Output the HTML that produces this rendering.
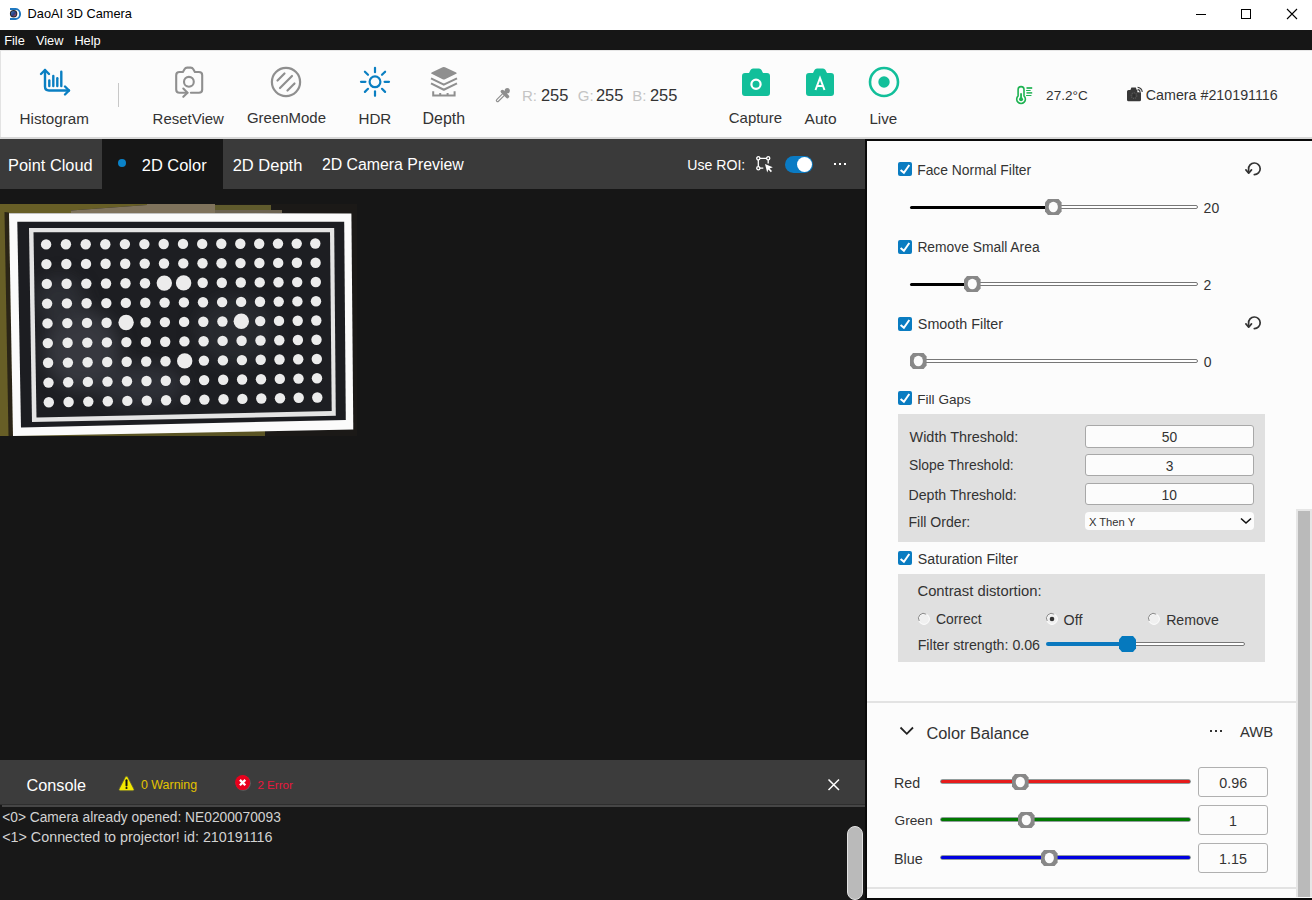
<!DOCTYPE html>
<html><head><meta charset="utf-8">
<style>
*{margin:0;padding:0;box-sizing:border-box}
html,body{width:1312px;height:900px;overflow:hidden;background:#fff;font-family:"Liberation Sans",sans-serif}
.a{position:absolute}
.t{position:absolute;white-space:nowrap;line-height:1}
svg{position:absolute;overflow:visible}
</style></head><body>
<div class="a" style="left:0px;top:0px;width:1312px;height:30px;background:#ffffff;"></div>
<svg style="left:9px;top:7px" width="14" height="14" viewBox="0 0 14 14">
<defs><linearGradient id="lg1" x1="0" y1="0" x2="1" y2="1"><stop offset="0" stop-color="#3f78c0"/><stop offset="0.55" stop-color="#2c3f80"/><stop offset="1" stop-color="#d04858"/></linearGradient></defs>
<path d="M1 2.1 H6.8 A4.3 4.9 0 0 1 6.8 11.9 H1" fill="none" stroke="#1f78c0" stroke-width="2"/>
<circle cx="4.6" cy="6.8" r="3.7" fill="#262626"/><circle cx="4.6" cy="6.8" r="2.7" fill="url(#lg1)"/>
</svg>
<div class="t" style="left:27.58px;top:8.04px;font-size:12.78px;color:#000;">DaoAI 3D Camera</div>
<div class="a" style="left:1196px;top:14px;width:10px;height:1px;background:#000;"></div>
<div class="a" style="left:1241px;top:9px;width:10px;height:10px;background:transparent;border:1px solid #000"></div>
<svg style="left:1287px;top:9px" width="10" height="10" viewBox="0 0 10 10"><path d="M0 0 L10 10 M10 0 L0 10" stroke="#000" stroke-width="1.1"/></svg>
<div class="a" style="left:0px;top:30px;width:1312px;height:20px;background:#161616;"></div>
<div class="t" style="left:4.18px;top:34.52px;font-size:12.80px;color:#fff;">File</div>
<div class="t" style="left:35.94px;top:34.52px;font-size:12.80px;color:#fff;">View</div>
<div class="t" style="left:74.38px;top:34.52px;font-size:12.80px;color:#fff;">Help</div>
<div class="a" style="left:0px;top:50px;width:1312px;height:87px;background:#fcfcfc;border-top:1px solid #e6e6e6;border-left:1px solid #e3e3e3"></div>
<div class="a" style="left:0px;top:137px;width:1312px;height:2px;background:#d8d8d8;"></div>
<svg style="left:38px;top:66px" width="34" height="28" viewBox="0 0 34 28">
<g fill="none" stroke="#0a7fc2" stroke-width="2.4" stroke-linecap="round" stroke-linejoin="round">
<path d="M3 8 L7 4 L11 8"/><path d="M7 4 V20.5 Q7 24.5 11 24.5 H31"/><path d="M27 20.5 L31 24.5 L27 28.5"/>
<path d="M11.3 20 V14.5"/><path d="M15.3 20 V9.9"/><path d="M19.3 20 V12.3"/><path d="M23.3 20 V5.7"/>
</g></svg>
<div class="a" style="left:118px;top:83px;width:1px;height:24px;background:#c8c8c8;"></div>
<div class="t" style="left:19.58px;top:111.28px;font-size:15.20px;color:#333;">Histogram</div>
<svg style="left:174px;top:66px" width="31" height="33" viewBox="0 0 31 33">
<g fill="none" stroke="#8f8f8f" stroke-width="2.1" stroke-linecap="round" stroke-linejoin="round">
<path d="M16.9 26.7 H24.9 Q28.2 26.7 28.2 23.4 V9.3 Q28.2 6 24.9 6 H20.9 L19.3 3.2 Q18.4 1.6 16.6 1.6 H13.2 Q11.4 1.6 10.5 3.2 L8.9 6 H5.5 Q2.2 6 2.2 9.3 V23.4 Q2.2 26.7 5.5 26.7 H13.4"/>
<circle cx="14.9" cy="15.8" r="4.9"/>
<path d="M9.3 22.6 L13.5 26.7 L9.3 30.8"/>
</g></svg>
<div class="t" style="left:152.60px;top:111.46px;font-size:14.98px;color:#333;">ResetView</div>
<svg style="left:270px;top:66px" width="32" height="32" viewBox="0 0 32 32">
<g fill="none" stroke="#8f8f8f" stroke-width="2.2" stroke-linecap="round">
<circle cx="16" cy="16" r="14.1"/>
<path d="M7.5 14.5 L14.5 7.5"/><path d="M10 22 L22 10"/><path d="M17.5 24.5 L24.5 17.5"/>
</g></svg>
<div class="t" style="left:246.95px;top:111.48px;font-size:14.97px;color:#333;">GreenMode</div>
<svg style="left:359px;top:66px" width="32" height="32" viewBox="0 0 32 32">
<g fill="none" stroke="#0a7fc2" stroke-width="2.2" stroke-linecap="round">
<circle cx="16" cy="15.8" r="5.4"/>
<path d="M16 1.8 V6.2"/><path d="M16 25.4 V29.8"/><path d="M2 15.8 H6.4"/><path d="M25.6 15.8 H30"/>
<path d="M5.9 5.7 L9 8.8"/><path d="M23 22.8 L26.1 25.9"/><path d="M26.1 5.7 L23 8.8"/><path d="M9 22.8 L5.9 25.9"/>
</g></svg>
<div class="t" style="left:358.49px;top:111.33px;font-size:15.15px;color:#333;">HDR</div>
<svg style="left:430px;top:66px" width="28" height="32" viewBox="0 0 28 32">
<path d="M12.6 1.2 Q13.8 0.6 15 1.2 L26.2 6.4 Q27.4 7.1 26.2 7.8 L15 13.3 Q13.8 13.9 12.6 13.3 L1.6 7.8 Q0.4 7.1 1.6 6.4 Z" fill="#8f8f8f"/>
<path d="M1 12.4 L13.8 18.6 L27 12.4" fill="none" stroke="#8f8f8f" stroke-width="2.1" stroke-linejoin="round"/>
<path d="M1 17.4 L13.8 23.7 L27 17.4" fill="none" stroke="#8f8f8f" stroke-width="2.1" stroke-linejoin="round"/>
<path d="M3.2 25.3 V29.6 H24.6 V25.3 M10.2 27.1 V29.6 M17.6 27.1 V29.6" fill="none" stroke="#8f8f8f" stroke-width="2"/>
</svg>
<div class="t" style="left:422.52px;top:110.64px;font-size:15.95px;color:#333;">Depth</div>
<svg style="left:495px;top:87px" width="16" height="16" viewBox="0 0 16 16">
<path d="M9.5 6.5 L2.6 13.4" stroke="#8f8f8f" stroke-width="3.6" stroke-linecap="round"/>
<path d="M8.5 7.5 L2.6 13.4" stroke="#fcfcfc" stroke-width="1.3" stroke-linecap="round"/>
<path d="M7.4 4.6 L12.4 9.6" stroke="#8f8f8f" stroke-width="3.6" stroke-linecap="round"/>
<circle cx="12.3" cy="3.7" r="2.6" fill="#8f8f8f"/>
<path d="M9.6 6.4 L12.3 3.7" stroke="#8f8f8f" stroke-width="3.6"/>
</svg>
<div class="t" style="left:522.00px;top:87.85px;font-size:15.00px;color:#c4c4c4;">R:</div>
<div class="t" style="left:540.98px;top:86.62px;font-size:16.44px;color:#333;">255</div>
<div class="t" style="left:577.85px;top:87.85px;font-size:15.00px;color:#c4c4c4;">G:</div>
<div class="t" style="left:595.88px;top:86.62px;font-size:16.44px;color:#333;">255</div>
<div class="t" style="left:632.30px;top:87.85px;font-size:15.00px;color:#c4c4c4;">B:</div>
<div class="t" style="left:649.98px;top:86.62px;font-size:16.44px;color:#333;">255</div>
<svg style="left:741px;top:68px" width="30" height="29" viewBox="0 0 30 29">
<path d="M8 5 L9.5 2 Q10.3 0.5 12 0.5 H18 Q19.7 0.5 20.5 2 L22 5 H26 Q29 5 29 8 V25 Q29 28 26 28 H4 Q1 28 1 25 V8 Q1 5 4 5 Z" fill="#12bf9a"/>
<circle cx="15" cy="16.3" r="4.6" fill="none" stroke="#fff" stroke-width="2.2"/>
</svg>
<div class="t" style="left:728.75px;top:111.47px;font-size:14.97px;color:#333;">Capture</div>
<svg style="left:805px;top:68px" width="30" height="29" viewBox="0 0 30 29">
<path d="M8 5 L9.5 2 Q10.3 0.5 12 0.5 H18 Q19.7 0.5 20.5 2 L22 5 H26 Q29 5 29 8 V25 Q29 28 26 28 H4 Q1 28 1 25 V8 Q1 5 4 5 Z" fill="#12bf9a"/>
<path d="M10.5 22 L15 10 L19.5 22 M12.2 18 H17.8" fill="none" stroke="#fff" stroke-width="2"/>
</svg>
<div class="t" style="left:804.60px;top:111.00px;font-size:15.53px;color:#333;">Auto</div>
<svg style="left:868px;top:66px" width="32" height="32" viewBox="0 0 32 32">
<circle cx="16" cy="16" r="14" fill="none" stroke="#12bf9a" stroke-width="2.6"/>
<circle cx="16" cy="16" r="5.7" fill="#12bf9a"/>
</svg>
<div class="t" style="left:869.39px;top:111.33px;font-size:15.15px;color:#333;">Live</div>
<svg style="left:1015px;top:85px" width="18" height="20" viewBox="0 0 18 20">
<path d="M3.1 10.95 V4.55 A2.95 2.95 0 0 1 9.0 4.55 V10.95 A4.35 4.35 0 1 1 3.1 10.95 Z" fill="none" stroke="#1db251" stroke-width="1.6"/>
<path d="M6.05 8.2 V14" stroke="#1db251" stroke-width="1.8"/><circle cx="6.05" cy="14.3" r="2.0" fill="#1db251"/>
<path d="M11.5 3 H17.2 M11.5 7.9 H17.2" stroke="#1db251" stroke-width="1.8" opacity="0.85"/>
<path d="M11.5 5.5 H15.2 M11.5 10.5 H16" stroke="#1db251" stroke-width="1.2" stroke-linecap="round"/>
</svg>
<div class="t" style="left:1046.12px;top:89.38px;font-size:13.56px;color:#333;">27.2°C</div>
<svg style="left:1126px;top:85px" width="17" height="17" viewBox="0 0 17 17">
<path d="M2.5 5 H4.4 L5.4 2.6 H9.8 L10.8 5 H13.5 Q15 5 15 6.5 V14.7 Q15 16.2 13.5 16.2 H2.5 Q1 16.2 1 14.7 V6.5 Q1 5 2.5 5 Z" fill="#383838"/>
<path d="M11.4 7.2 V1.2 A6 6 0 0 1 17.4 7.2 Z" fill="#fcfcfc"/>
<path d="M11.6 2.4 A4.6 4.6 0 0 1 16.2 7" fill="none" stroke="#383838" stroke-width="1.1"/>
<path d="M11.6 4.6 A2.4 2.4 0 0 1 14 7" fill="none" stroke="#383838" stroke-width="1.1"/>
<circle cx="8" cy="10.6" r="2.8" fill="none" stroke="#5a5a5a" stroke-width="1.1" stroke-dasharray="1.2 0.9"/>
<rect x="7.3" y="9.2" width="1.4" height="2.8" fill="#2a2a2a"/>
</svg>
<div class="t" style="left:1145.79px;top:87.87px;font-size:14.27px;color:#333;">Camera #210191116</div>
<div class="a" style="left:0px;top:139px;width:865px;height:50px;background:#3a3a3a;"></div>
<div class="a" style="left:102px;top:139px;width:121px;height:50px;background:#161616;"></div>
<div class="t" style="left:8.09px;top:157.00px;font-size:16.36px;color:#fff;">Point Cloud</div>
<div class="a" style="left:118px;top:159px;width:8px;height:8px;border-radius:50%;background:#0a82c8"></div>
<div class="t" style="left:141.78px;top:156.92px;font-size:16.44px;color:#fff;">2D Color</div>
<div class="t" style="left:232.68px;top:156.88px;font-size:16.50px;color:#fff;">2D Depth</div>
<div class="t" style="left:321.91px;top:157.42px;font-size:15.85px;color:#fff;">2D Camera Preview</div>
<div class="t" style="left:687.34px;top:158.12px;font-size:14.09px;color:#fff;">Use ROI:</div>
<svg style="left:755.7px;top:156px" width="18" height="17" viewBox="0 0 18 17">
<g fill="none" stroke="#fff" stroke-width="1.3">
<circle cx="2.3" cy="2.3" r="1.6"/><circle cx="12.2" cy="2.3" r="1.6"/><circle cx="2.3" cy="12.2" r="1.6"/>
<path d="M3.9 2.3 H10.6 M2.3 3.9 V10.6 M3.9 12.2 H7.3 M12.2 3.9 V7.6"/>
</g>
<path d="M9 8 L16.8 11.3 L13.6 12.4 L16 15 L14.8 16.2 L12.4 13.6 L11.2 16.6 Z" fill="#fff"/>
</svg>
<div class="a" style="left:785px;top:155.5px;width:28px;height:17px;border-radius:9px;background:#0a7bc4"></div>
<div class="a" style="left:797px;top:156.5px;width:15px;height:15px;border-radius:50%;background:#fff"></div>
<div class="a" style="left:834px;top:162.5px;width:2.2px;height:2.2px;background:#fff;"></div>
<div class="a" style="left:839px;top:162.5px;width:2.2px;height:2.2px;background:#fff;"></div>
<div class="a" style="left:844px;top:162.5px;width:2.2px;height:2.2px;background:#fff;"></div>
<div class="a" style="left:0px;top:189px;width:865px;height:571px;background:#161616;"></div>
<div class="a" style="left:0px;top:760px;width:865px;height:44px;background:#3c3c3c;"></div>
<div class="a" style="left:0px;top:804px;width:865px;height:1px;background:#2e2e2e;"></div>
<div class="a" style="left:0px;top:805px;width:865px;height:95px;background:#181818;"></div>
<div class="a" style="left:2px;top:805px;width:863px;height:2px;background:#464646;"></div>
<div class="t" style="left:26.49px;top:777.19px;font-size:16.25px;color:#fff;">Console</div>
<svg style="left:117.5px;top:774.5px" width="17" height="17" viewBox="0 0 17 17">
<path d="M8.5 1.2 Q9.3 1.2 9.8 2.2 L16 14.2 Q16.5 15.6 15 15.8 H2 Q0.5 15.6 1 14.2 L7.2 2.2 Q7.7 1.2 8.5 1.2 Z" fill="#f2e800" stroke="#5a5a3a" stroke-width="0.8"/>
<path d="M8.5 5.2 V10.6" stroke="#111" stroke-width="2" stroke-linecap="round"/><circle cx="8.5" cy="13" r="1.1" fill="#111"/>
</svg>
<div class="t" style="left:141.00px;top:778.95px;font-size:12.41px;color:#e3c300;">0 Warning</div>
<svg style="left:235px;top:775px" width="17" height="17" viewBox="0 0 17 17">
<circle cx="8.2" cy="8.2" r="7.6" fill="#7a7a7a" opacity="0.6"/>
<circle cx="7.6" cy="7.6" r="7.5" fill="#e8001c"/>
<path d="M4.9 4.9 L10.3 10.3 M10.3 4.9 L4.9 10.3" stroke="#fff" stroke-width="2.3"/>
</svg>
<div class="t" style="left:257.42px;top:779.14px;font-size:11.61px;color:#e8173d;">2 Error</div>
<svg style="left:828px;top:778.5px" width="12" height="12" viewBox="0 0 12 12"><path d="M0.5 0.5 L11 11 M11 0.5 L0.5 11" stroke="#fff" stroke-width="1.5"/></svg>
<div class="t" style="left:2.21px;top:811.29px;font-size:13.78px;color:#d2d2d2;">&lt;0&gt; Camera already opened: NE0200070093</div>
<div class="t" style="left:2.18px;top:829.82px;font-size:14.33px;color:#d2d2d2;">&lt;1&gt; Connected to projector! id: 210191116</div>
<div class="a" style="left:847px;top:826px;width:16px;height:74px;border-radius:8px;background:#bababa;border:1.5px solid #e2e2e2"></div>
<div class="a" style="left:865px;top:139px;width:2px;height:761px;background:#0a0a0a;"></div>
<div class="a" style="left:865px;top:139px;width:447px;height:2px;background:#0a0a0a;"></div>
<div class="a" style="left:867px;top:141px;width:445px;height:757px;background:#fcfcfc;"></div>
<div class="a" style="left:865px;top:898px;width:447px;height:2px;background:#0a0a0a;"></div>
<svg style="left:898px;top:162px" width="14" height="14" viewBox="0 0 14 14">
<rect x="0" y="0" width="14" height="14" rx="2" fill="#0a7cc1"/>
<path d="M2.6 7.9 L5.9 10.8 L11.3 3.0" fill="none" stroke="#fff" stroke-width="2"/>
</svg>
<div class="t" style="left:917.19px;top:163.52px;font-size:13.86px;color:#333;">Face Normal Filter</div>
<svg style="left:1245.4px;top:159.9px" width="18" height="18" viewBox="0 0 18 18">
<path d="M9.3 14.6 A5.8 5.8 0 1 0 3.6 9.2 V12.4" fill="none" stroke="#333" stroke-width="1.7" stroke-linecap="round"/>
<path d="M0.9 9.9 L3.7 13.2 L6.5 9.9" fill="none" stroke="#333" stroke-width="1.7" stroke-linecap="round" stroke-linejoin="round"/>
</svg>
<div class="a" style="left:1053.3px;top:205.0px;width:144.29999999999995px;height:4.4px;background:#fff;border:1px solid #777;border-radius:2.2px"></div>
<div class="a" style="left:909.5px;top:205.7px;width:143.79999999999995px;height:3px;background:#000;border-radius:1.5px"></div>
<svg style="left:1045.0px;top:199.2px" width="17" height="16" viewBox="0 0 17 16">
<path d="M3 0 H13.6 L16.6 3.4 V12.6 L13.6 16 H3 L0 12.6 V3.4 Z" fill="#888"/><ellipse cx="8.3" cy="8" rx="4.6" ry="5.2" fill="#fcfcfc"/>
</svg>
<div class="t" style="left:1203.60px;top:201.30px;font-size:14.00px;color:#333;">20</div>
<svg style="left:898px;top:239.5px" width="14" height="14" viewBox="0 0 14 14">
<rect x="0" y="0" width="14" height="14" rx="2" fill="#0a7cc1"/>
<path d="M2.6 7.9 L5.9 10.8 L11.3 3.0" fill="none" stroke="#fff" stroke-width="2"/>
</svg>
<div class="t" style="left:917.39px;top:240.53px;font-size:13.84px;color:#333;">Remove Small Area</div>
<div class="a" style="left:972.2px;top:282.0px;width:225.39999999999986px;height:4.4px;background:#fff;border:1px solid #777;border-radius:2.2px"></div>
<div class="a" style="left:909.5px;top:282.7px;width:62.700000000000045px;height:3px;background:#000;border-radius:1.5px"></div>
<svg style="left:963.9px;top:276.2px" width="17" height="16" viewBox="0 0 17 16">
<path d="M3 0 H13.6 L16.6 3.4 V12.6 L13.6 16 H3 L0 12.6 V3.4 Z" fill="#888"/><ellipse cx="8.3" cy="8" rx="4.6" ry="5.2" fill="#fcfcfc"/>
</svg>
<div class="t" style="left:1203.60px;top:278.30px;font-size:14.00px;color:#333;">2</div>
<svg style="left:898px;top:316.5px" width="14" height="14" viewBox="0 0 14 14">
<rect x="0" y="0" width="14" height="14" rx="2" fill="#0a7cc1"/>
<path d="M2.6 7.9 L5.9 10.8 L11.3 3.0" fill="none" stroke="#fff" stroke-width="2"/>
</svg>
<div class="t" style="left:917.85px;top:317.31px;font-size:14.34px;color:#333;">Smooth Filter</div>
<svg style="left:1245.4px;top:313.8px" width="18" height="18" viewBox="0 0 18 18">
<path d="M9.3 14.6 A5.8 5.8 0 1 0 3.6 9.2 V12.4" fill="none" stroke="#333" stroke-width="1.7" stroke-linecap="round"/>
<path d="M0.9 9.9 L3.7 13.2 L6.5 9.9" fill="none" stroke="#333" stroke-width="1.7" stroke-linecap="round" stroke-linejoin="round"/>
</svg>
<div class="a" style="left:918.3px;top:359.0px;width:279.29999999999995px;height:4.4px;background:#fff;border:1px solid #777;border-radius:2.2px"></div>
<div class="a" style="left:909.5px;top:359.7px;width:8.799999999999955px;height:3px;background:#000;border-radius:1.5px"></div>
<svg style="left:910.0px;top:353.2px" width="17" height="16" viewBox="0 0 17 16">
<path d="M3 0 H13.6 L16.6 3.4 V12.6 L13.6 16 H3 L0 12.6 V3.4 Z" fill="#888"/><ellipse cx="8.3" cy="8" rx="4.6" ry="5.2" fill="#fcfcfc"/>
</svg>
<div class="t" style="left:1203.74px;top:355.10px;font-size:14.00px;color:#333;">0</div>
<svg style="left:898px;top:391px" width="14" height="14" viewBox="0 0 14 14">
<rect x="0" y="0" width="14" height="14" rx="2" fill="#0a7cc1"/>
<path d="M2.6 7.9 L5.9 10.8 L11.3 3.0" fill="none" stroke="#fff" stroke-width="2"/>
</svg>
<div class="t" style="left:917.31px;top:392.76px;font-size:13.58px;color:#333;">Fill Gaps</div>
<div class="a" style="left:898px;top:414px;width:367px;height:128px;background:#e0e0e0;"></div>
<div class="t" style="left:909.53px;top:429.93px;font-size:14.44px;color:#333;">Width Threshold:</div>
<div class="t" style="left:908.97px;top:459.19px;font-size:13.90px;color:#333;">Slope Threshold:</div>
<div class="t" style="left:908.47px;top:487.97px;font-size:14.16px;color:#333;">Depth Threshold:</div>
<div class="t" style="left:908.47px;top:515.22px;font-size:14.09px;color:#333;">Fill Order:</div>
<div class="a" style="left:1085px;top:425.2px;width:169px;height:22.4px;background:#fcfcfc;border:1px solid #a8a8a8;border-radius:3px"></div>
<div class="t" style="left:1161.81px;top:431.17px;font-size:13.80px;color:#333;">50</div>
<div class="a" style="left:1085px;top:454.3px;width:169px;height:22.1px;background:#fcfcfc;border:1px solid #a8a8a8;border-radius:3px"></div>
<div class="t" style="left:1165.67px;top:459.97px;font-size:13.80px;color:#333;">3</div>
<div class="a" style="left:1085px;top:483.3px;width:169px;height:22.2px;background:#fcfcfc;border:1px solid #a8a8a8;border-radius:3px"></div>
<div class="t" style="left:1161.56px;top:489.07px;font-size:13.80px;color:#333;">10</div>
<div class="a" style="left:1085px;top:512px;width:169px;height:18px;background:#fcfcfc;border-radius:4px"></div>
<div class="t" style="left:1088.92px;top:516.68px;font-size:11.20px;color:#333;">X Then Y</div>
<svg style="left:1240px;top:517px" width="12" height="8" viewBox="0 0 12 8"><path d="M1 1.5 L6 6 L11 1.5" fill="none" stroke="#111" stroke-width="1.6"/></svg>
<svg style="left:898px;top:551.3px" width="14" height="14" viewBox="0 0 14 14">
<rect x="0" y="0" width="14" height="14" rx="2" fill="#0a7cc1"/>
<path d="M2.6 7.9 L5.9 10.8 L11.3 3.0" fill="none" stroke="#fff" stroke-width="2"/>
</svg>
<div class="t" style="left:917.86px;top:552.05px;font-size:14.18px;color:#333;">Saturation Filter</div>
<div class="a" style="left:898px;top:574px;width:367px;height:88px;background:#e0e0e0;"></div>
<div class="t" style="left:917.46px;top:584.43px;font-size:14.79px;color:#333;">Contrast distortion:</div>
<svg style="left:917.9px;top:613.1px" width="12" height="12" viewBox="0 0 12 12">
<circle cx="6" cy="6" r="5.4" fill="#f0f0f0" stroke="#fff" stroke-width="1"/>
<path d="M1.2 8 A5 5 0 0 1 8.2 1.2" fill="none" stroke="#8a8a8a" stroke-width="1"/>
</svg>
<div class="t" style="left:935.90px;top:612.85px;font-size:13.94px;color:#333;">Correct</div>
<svg style="left:1045.8px;top:613.1px" width="12" height="12" viewBox="0 0 12 12">
<circle cx="6" cy="6" r="5.4" fill="#f0f0f0" stroke="#fff" stroke-width="1"/>
<path d="M1.2 8 A5 5 0 0 1 8.2 1.2" fill="none" stroke="#8a8a8a" stroke-width="1"/><circle cx="6" cy="6" r="2.3" fill="#333"/>
</svg>
<div class="t" style="left:1063.56px;top:612.55px;font-size:14.30px;color:#333;">Off</div>
<svg style="left:1148.2px;top:613.1px" width="12" height="12" viewBox="0 0 12 12">
<circle cx="6" cy="6" r="5.4" fill="#f0f0f0" stroke="#fff" stroke-width="1"/>
<path d="M1.2 8 A5 5 0 0 1 8.2 1.2" fill="none" stroke="#8a8a8a" stroke-width="1"/>
</svg>
<div class="t" style="left:1166.17px;top:612.68px;font-size:14.14px;color:#333;">Remove</div>
<div class="t" style="left:917.66px;top:637.72px;font-size:14.21px;color:#333;">Filter strength: 0.06</div>
<div class="a" style="left:1127px;top:641.8px;width:118px;height:4.4px;background:#fff;border:1px solid #777;border-radius:2.2px"></div>
<div class="a" style="left:1046px;top:642px;width:81px;height:4px;background:#0a78be;border-radius:2px"></div>
<svg style="left:1118.8px;top:635.7px" width="17" height="16" viewBox="0 0 17 16">
<path d="M3 0 H14 L17 3.4 V12.6 L14 16 H3 L0 12.6 V3.4 Z" fill="#0579be"/></svg>
<div class="a" style="left:867px;top:701px;width:429px;height:2px;background:#e3e3e3;"></div>
<svg style="left:899px;top:726px" width="16" height="10" viewBox="0 0 16 10"><path d="M1.5 1.5 L7.8 7.8 L14 1.5" fill="none" stroke="#222" stroke-width="1.8"/></svg>
<div class="t" style="left:926.38px;top:724.56px;font-size:16.39px;color:#333;">Color Balance</div>
<div class="a" style="left:1210px;top:730px;width:2.2px;height:2.2px;background:#333;"></div>
<div class="a" style="left:1215px;top:730px;width:2.2px;height:2.2px;background:#333;"></div>
<div class="a" style="left:1220px;top:730px;width:2.2px;height:2.2px;background:#333;"></div>
<div class="t" style="left:1240.00px;top:724.69px;font-size:14.84px;color:#333;">AWB</div>
<div class="t" style="left:894.06px;top:776.08px;font-size:14.26px;color:#333;">Red</div>
<div class="a" style="left:940.5px;top:780.1px;width:249px;height:3.2px;background:#e61c1c;border-radius:1.6px;box-shadow:0 0 0 0.8px #6e7c7c"></div>
<svg style="left:1012.2px;top:774.1px" width="17" height="16" viewBox="0 0 17 16">
<path d="M3 0 H13.6 L16.6 3.4 V12.6 L13.6 16 H3 L0 12.6 V3.4 Z" fill="#888"/><ellipse cx="8.3" cy="8" rx="4.6" ry="5.2" fill="#fcfcfc"/>
</svg>
<div class="t" style="left:894.52px;top:814.36px;font-size:13.70px;color:#333;">Green</div>
<div class="a" style="left:940.5px;top:818.0px;width:249px;height:3.2px;background:#007800;border-radius:1.6px;box-shadow:0 0 0 0.8px #6e7c7c"></div>
<svg style="left:1018.1px;top:812.0px" width="17" height="16" viewBox="0 0 17 16">
<path d="M3 0 H13.6 L16.6 3.4 V12.6 L13.6 16 H3 L0 12.6 V3.4 Z" fill="#888"/><ellipse cx="8.3" cy="8" rx="4.6" ry="5.2" fill="#fcfcfc"/>
</svg>
<div class="t" style="left:894.05px;top:851.61px;font-size:14.35px;color:#333;">Blue</div>
<div class="a" style="left:940.5px;top:855.9px;width:249px;height:3.2px;background:#0000e0;border-radius:1.6px;box-shadow:0 0 0 0.8px #6e7c7c"></div>
<svg style="left:1041.2px;top:849.9px" width="17" height="16" viewBox="0 0 17 16">
<path d="M3 0 H13.6 L16.6 3.4 V12.6 L13.6 16 H3 L0 12.6 V3.4 Z" fill="#888"/><ellipse cx="8.3" cy="8" rx="4.6" ry="5.2" fill="#fcfcfc"/>
</svg>
<div class="a" style="left:1198.4px;top:767px;width:69.5px;height:30.0px;background:#fcfcfc;border:1px solid #b0b0b0;border-radius:3px"></div>
<div class="t" style="left:1219.29px;top:775.85px;font-size:14.30px;color:#333;">0.96</div>
<div class="a" style="left:1198.4px;top:805px;width:69.5px;height:30.0px;background:#fcfcfc;border:1px solid #b0b0b0;border-radius:3px"></div>
<div class="t" style="left:1229.02px;top:813.85px;font-size:14.30px;color:#333;">1</div>
<div class="a" style="left:1198.4px;top:843px;width:69.5px;height:30.0px;background:#fcfcfc;border:1px solid #b0b0b0;border-radius:3px"></div>
<div class="t" style="left:1219.04px;top:851.85px;font-size:14.30px;color:#333;">1.15</div>
<div class="a" style="left:867px;top:887px;width:429px;height:2px;background:#e3e3e3;"></div>
<div class="a" style="left:1296px;top:509px;width:16px;height:388px;background:#bababa;border:2px solid #e6e6e6;border-bottom:none"></div>
<svg style="left:0;top:0" width="1312" height="900" viewBox="0 0 1312 900">
<rect x="0" y="204" width="357" height="232" fill="#1b1917"/>
<path d="M0 204 H147 V205 L71 210.5 V213 H9 L13 436 H0 Z" fill="#675e26"/>
<path d="M71 210.5 L147 205 V204 H215 V213 H71 Z" fill="#7f735c"/>
<path d="M215 205 H271 V212 H215 Z" fill="#5f5a2c"/>
<path d="M215 210 H282 V213 H215 Z" fill="#6b6250"/>
<path d="M13 429 H265 V436 H13 Z" fill="#5a5424"/>
<path d="M4.5 212 L9 212.5 L13 436 L8.5 436 Z" fill="#2a2416"/>
<path d="M9 213.2 L351.4 213.4 L353.3 429.6 L13 436 Z" fill="#fbfbfb"/>
<path d="M17.3 221.7 L344.2 221.8 L345.8 420 L21 427.5 Z" fill="#1c1d21"/>
<path d="M29 228 L334.2 228.1 L335.8 415.8 L32 422 Z" fill="#e4e4e4"/>
<path d="M33.5 232.3 L330 232.3 L331.7 411 L36.5 417.5 Z" fill="#1d1e22"/>
<defs><filter id="bl" x="-50%" y="-50%" width="200%" height="200%"><feGaussianBlur stdDeviation="9"/></filter>
<clipPath id="cp"><path d="M33.5 232.3 L330 232.3 L331.7 411 L36.5 417.5 Z"/></clipPath></defs>
<g clip-path="url(#cp)"><g filter="url(#bl)" opacity="0.55"><ellipse cx="82" cy="350" rx="38" ry="40" fill="#4d5058"/><ellipse cx="140" cy="385" rx="45" ry="22" fill="#3e4148"/><ellipse cx="235" cy="330" rx="40" ry="35" fill="#32353b"/><ellipse cx="60" cy="300" rx="25" ry="25" fill="#3a3d44"/></g></g>
<g fill="#ececec"><circle cx="46.1" cy="244.4" r="5.2"/><circle cx="65.9" cy="244.3" r="5.2"/><circle cx="85.7" cy="244.3" r="5.2"/><circle cx="105.3" cy="244.2" r="5.2"/><circle cx="124.9" cy="244.1" r="5.2"/><circle cx="144.4" cy="244.1" r="5.2"/><circle cx="163.7" cy="244.0" r="5.2"/><circle cx="183.0" cy="243.9" r="5.2"/><circle cx="202.2" cy="243.9" r="5.2"/><circle cx="221.3" cy="243.8" r="5.2"/><circle cx="240.3" cy="243.8" r="5.2"/><circle cx="259.2" cy="243.7" r="5.2"/><circle cx="278.0" cy="243.6" r="5.2"/><circle cx="296.7" cy="243.6" r="5.2"/><circle cx="315.3" cy="243.5" r="5.2"/><circle cx="46.4" cy="264.1" r="5.2"/><circle cx="66.3" cy="264.0" r="5.2"/><circle cx="86.0" cy="263.9" r="5.2"/><circle cx="105.6" cy="263.8" r="5.2"/><circle cx="125.2" cy="263.7" r="5.2"/><circle cx="144.7" cy="263.6" r="5.2"/><circle cx="164.0" cy="263.5" r="5.2"/><circle cx="183.3" cy="263.4" r="5.2"/><circle cx="202.5" cy="263.3" r="5.2"/><circle cx="221.5" cy="263.2" r="5.2"/><circle cx="240.5" cy="263.1" r="5.2"/><circle cx="259.4" cy="263.0" r="5.2"/><circle cx="278.2" cy="262.9" r="5.2"/><circle cx="296.9" cy="262.8" r="5.2"/><circle cx="315.6" cy="262.8" r="5.2"/><circle cx="46.8" cy="283.9" r="5.2"/><circle cx="66.6" cy="283.7" r="5.2"/><circle cx="86.3" cy="283.6" r="5.2"/><circle cx="106.0" cy="283.5" r="5.2"/><circle cx="125.5" cy="283.3" r="5.2"/><circle cx="145.0" cy="283.2" r="5.2"/><circle cx="164.3" cy="283.1" r="7.7"/><circle cx="183.6" cy="282.9" r="7.7"/><circle cx="202.7" cy="282.8" r="5.2"/><circle cx="221.8" cy="282.7" r="5.2"/><circle cx="240.8" cy="282.5" r="5.2"/><circle cx="259.7" cy="282.4" r="5.2"/><circle cx="278.5" cy="282.3" r="5.2"/><circle cx="297.2" cy="282.1" r="5.2"/><circle cx="315.8" cy="282.0" r="5.2"/><circle cx="47.1" cy="303.6" r="5.2"/><circle cx="66.9" cy="303.4" r="5.2"/><circle cx="86.6" cy="303.3" r="5.2"/><circle cx="106.3" cy="303.1" r="5.2"/><circle cx="125.8" cy="302.9" r="5.2"/><circle cx="145.3" cy="302.8" r="5.2"/><circle cx="164.6" cy="302.6" r="5.2"/><circle cx="183.9" cy="302.4" r="5.2"/><circle cx="203.0" cy="302.3" r="5.2"/><circle cx="222.1" cy="302.1" r="5.2"/><circle cx="241.1" cy="301.9" r="5.2"/><circle cx="260.0" cy="301.8" r="5.2"/><circle cx="278.7" cy="301.6" r="5.2"/><circle cx="297.4" cy="301.4" r="5.2"/><circle cx="316.0" cy="301.2" r="5.2"/><circle cx="47.5" cy="323.4" r="5.2"/><circle cx="67.3" cy="323.1" r="5.2"/><circle cx="87.0" cy="322.9" r="5.2"/><circle cx="106.6" cy="322.7" r="5.2"/><circle cx="126.1" cy="322.5" r="7.7"/><circle cx="145.6" cy="322.3" r="5.2"/><circle cx="164.9" cy="322.1" r="5.2"/><circle cx="184.1" cy="321.9" r="5.2"/><circle cx="203.3" cy="321.7" r="5.2"/><circle cx="222.4" cy="321.5" r="5.2"/><circle cx="241.3" cy="321.3" r="7.7"/><circle cx="260.2" cy="321.1" r="5.2"/><circle cx="279.0" cy="320.9" r="5.2"/><circle cx="297.7" cy="320.7" r="5.2"/><circle cx="316.3" cy="320.5" r="5.2"/><circle cx="47.8" cy="343.1" r="5.2"/><circle cx="67.6" cy="342.8" r="5.2"/><circle cx="87.3" cy="342.6" r="5.2"/><circle cx="106.9" cy="342.4" r="5.2"/><circle cx="126.4" cy="342.1" r="5.2"/><circle cx="145.9" cy="341.9" r="5.2"/><circle cx="165.2" cy="341.7" r="5.2"/><circle cx="184.4" cy="341.4" r="5.2"/><circle cx="203.6" cy="341.2" r="5.2"/><circle cx="222.6" cy="340.9" r="5.2"/><circle cx="241.6" cy="340.7" r="5.2"/><circle cx="260.5" cy="340.5" r="5.2"/><circle cx="279.3" cy="340.2" r="5.2"/><circle cx="297.9" cy="340.0" r="5.2"/><circle cx="316.5" cy="339.8" r="5.2"/><circle cx="48.1" cy="362.8" r="5.2"/><circle cx="67.9" cy="362.6" r="5.2"/><circle cx="87.6" cy="362.3" r="5.2"/><circle cx="107.2" cy="362.0" r="5.2"/><circle cx="126.7" cy="361.7" r="5.2"/><circle cx="146.2" cy="361.5" r="5.2"/><circle cx="165.5" cy="361.2" r="5.2"/><circle cx="184.7" cy="360.9" r="7.7"/><circle cx="203.9" cy="360.6" r="5.2"/><circle cx="222.9" cy="360.4" r="5.2"/><circle cx="241.9" cy="360.1" r="5.2"/><circle cx="260.7" cy="359.8" r="5.2"/><circle cx="279.5" cy="359.5" r="5.2"/><circle cx="298.2" cy="359.3" r="5.2"/><circle cx="316.8" cy="359.0" r="5.2"/><circle cx="48.5" cy="382.6" r="5.2"/><circle cx="68.2" cy="382.3" r="5.2"/><circle cx="87.9" cy="381.9" r="5.2"/><circle cx="107.5" cy="381.6" r="5.2"/><circle cx="127.0" cy="381.3" r="5.2"/><circle cx="146.5" cy="381.0" r="5.2"/><circle cx="165.8" cy="380.7" r="5.2"/><circle cx="185.0" cy="380.4" r="5.2"/><circle cx="204.1" cy="380.1" r="5.2"/><circle cx="223.2" cy="379.8" r="5.2"/><circle cx="242.1" cy="379.5" r="5.2"/><circle cx="261.0" cy="379.2" r="5.2"/><circle cx="279.8" cy="378.9" r="5.2"/><circle cx="298.5" cy="378.6" r="5.2"/><circle cx="317.0" cy="378.2" r="5.2"/><circle cx="48.8" cy="402.3" r="5.2"/><circle cx="68.6" cy="402.0" r="5.2"/><circle cx="88.3" cy="401.6" r="5.2"/><circle cx="107.8" cy="401.3" r="5.2"/><circle cx="127.3" cy="400.9" r="5.2"/><circle cx="146.8" cy="400.6" r="5.2"/><circle cx="166.1" cy="400.2" r="5.2"/><circle cx="185.3" cy="399.9" r="5.2"/><circle cx="204.4" cy="399.6" r="5.2"/><circle cx="223.5" cy="399.2" r="5.2"/><circle cx="242.4" cy="398.9" r="5.2"/><circle cx="261.3" cy="398.5" r="5.2"/><circle cx="280.0" cy="398.2" r="5.2"/><circle cx="298.7" cy="397.8" r="5.2"/><circle cx="317.3" cy="397.5" r="5.2"/></g>
</svg>
</body></html>
